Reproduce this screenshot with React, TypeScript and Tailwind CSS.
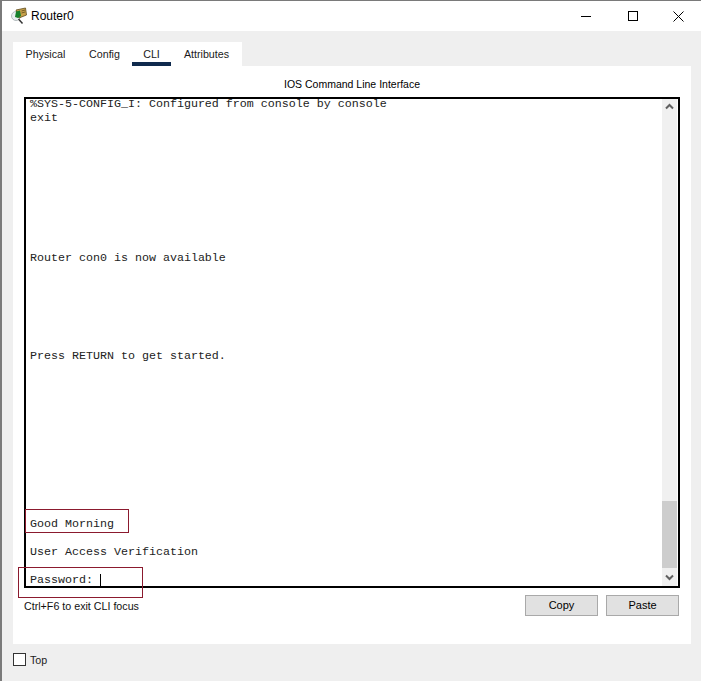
const lines: string[] = [
  "%SYS-5-CONFIG_I: Configured from console by console",
  "exit",
  "", "", "", "", "", "", "", "", "",
  "Router con0 is now available",
  "", "", "", "", "", "",
  "Press RETURN to get started.",
  "", "", "", "", "", "", "", "", "", "", "",
  "Good Morning",
  "",
  "User Access Verification",
  "",
];

function RouterIcon() {
  return (
    <svg width="18" height="18" viewBox="0 0 18 18" className="shrink-0">
      <circle cx="6" cy="9" r="4.5" fill="#e8eef0" stroke="#b4bcbe" />
      <path d="M8.5 12 L12.5 16.5" stroke="#333" strokeWidth="1.5" />
      <path d="M6 3 L15.5 1 L16.5 8 L9 11 Z" fill="#c9a24a" stroke="#5d4a1c" strokeWidth="0.8" />
      <path d="M6 4.5 L10 3.4 L11 9 L8 11 L5 10 Z" fill="#16802c" />
      <path d="M11.5 4 L15 3 M11.5 6 L15 5" stroke="#5d4a1c" strokeWidth="0.8" />
    </svg>
  );
}

function TabLabel({ label, active, className }: { label: string; active?: boolean; className: string }) {
  return (
    <div className={`relative flex h-full items-center justify-center pt-[1px] text-[#1a1a1a] ${className}`}>
      {label}
      {active && <div className="absolute bottom-0 left-0 right-0 h-[4px] bg-[#0f2a4d]" />}
    </div>
  );
}

function Button({ label }: { label: string }) {
  return (
    <div className="flex h-[21px] w-[73px] items-center justify-center border border-[#a9a9a9] bg-[#e1e1e1] text-[11px] text-black">
      {label}
    </div>
  );
}

export default function App() {
  return (
    <div className="flex h-[681px] w-[701px] flex-col overflow-hidden border-t border-l-2 border-[#7a7a7a] bg-[#efefef] font-['Liberation_Sans',Arial,sans-serif]">
      <div className="flex h-[30px] shrink-0 items-center bg-white pl-[8px]">
        <RouterIcon />
        <span className="ml-[3px] text-[12px] text-black">Router0</span>
        <div className="ml-auto flex items-center">
          <div className="flex h-[30px] w-[46px] items-center justify-center">
            <svg width="10" height="10" viewBox="0 0 10 10"><path d="M0 5.5H10" stroke="#000" /></svg>
          </div>
          <div className="flex h-[30px] w-[46px] items-center justify-center pl-[1px]">
            <svg width="10" height="10" viewBox="0 0 10 10"><rect x="0.5" y="0.5" width="9" height="9" fill="none" stroke="#000" /></svg>
          </div>
          <div className="flex h-[30px] w-[46px] items-center justify-center">
            <svg width="11" height="11" viewBox="0 0 11 11"><path d="M0.5 0.5L10.5 10.5M10.5 0.5L0.5 10.5" stroke="#000" /></svg>
          </div>
        </div>
      </div>
      <div className="flex min-h-0 flex-1 flex-col pl-[11px] pr-[10px] pt-[11px]">
        <div className="flex h-[24px] w-[229px] shrink-0 items-stretch bg-white text-[10.7px]">
          <TabLabel label="Physical" className="ml-[11px] w-[43px]" />
          <TabLabel label="Config" className="ml-[21px] w-[33px]" />
          <TabLabel label="CLI" active className="ml-[11px] w-[39px]" />
          <TabLabel label="Attributes" className="ml-[11px] w-[49px]" />
        </div>
        <div className="flex h-[578px] shrink-0 flex-col bg-white px-[11px]">
          <div className="flex h-[31px] shrink-0 items-center justify-center pt-[7px] text-[10.5px] text-black">
            IOS Command Line Interface
          </div>
          <div className="relative flex h-[491px] shrink-0 border-2 border-black bg-white">
            <div className="min-w-0 flex-1 overflow-hidden pl-[4px] font-['Liberation_Mono','Courier_New',monospace] text-[11.67px] leading-[14px] text-[#222]">
              <div className="mt-[-2px]">
                {lines.map((l, i) => (
                  <div key={i} className="h-[14px] whitespace-pre">{l}</div>
                ))}
                <div className="flex h-[14px] items-center whitespace-pre">
                  <span>Password: </span>
                  <span className="mt-[1px] h-[14px] w-px bg-black" />
                </div>
              </div>
            </div>
            <div className="mr-px flex w-[15px] shrink-0 flex-col bg-[#f0f0f0]">
              <div className="flex h-[15px] items-center justify-center">
                <svg width="9" height="7" viewBox="0 0 9 7"><path d="M1 5.5L4.5 2L8 5.5" fill="none" stroke="#606060" strokeWidth="2" /></svg>
              </div>
              <div className="mt-[387px] h-[67px] bg-[#cdcdcd]" />
              <div className="mt-auto flex h-[18px] items-center justify-center">
                <svg width="9" height="7" viewBox="0 0 9 7"><path d="M1 1.5L4.5 5L8 1.5" fill="none" stroke="#606060" strokeWidth="2" /></svg>
              </div>
            </div>
            <div className="pointer-events-none absolute left-[-1px] top-[410px] h-[24px] w-[104px] border border-[#8b1a2e]" />
            <div className="pointer-events-none absolute left-[-8px] top-[468px] h-[31px] w-[125px] border border-[#8b1a2e]" />
          </div>
          <div className="flex items-start justify-between pr-[1px] pt-[7px]">
            <span className="mt-[3px] text-[10.7px] text-[#111]">Ctrl+F6 to exit CLI focus</span>
            <div className="flex gap-[8px]">
              <Button label="Copy" />
              <Button label="Paste" />
            </div>
          </div>
        </div>
        <div className="flex items-start pt-[9px]">
          <div className="h-[13px] w-[13px] border border-[#333] bg-white" />
          <span className="ml-[4px] text-[10.7px] leading-[14px] text-[#222]">Top</span>
        </div>
      </div>
    </div>
  );
}
